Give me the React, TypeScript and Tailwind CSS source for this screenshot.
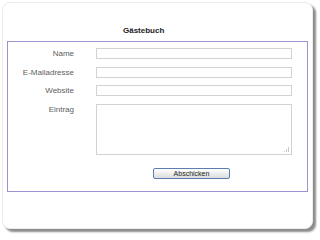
import React from "react";

export default function App() {
  const font = { fontFamily: '"Liberation Sans", Arial, sans-serif' };
  return (
    <div className="w-[320px] h-[240px] bg-white overflow-hidden" style={font}>
      <div className="ml-[2px] mt-[2px] w-[311px] h-[227px] rounded-[8px] border border-[#ececec] bg-white shadow-[3px_3px_2px_rgba(0,0,0,0.45)]">
        <div className="h-[38px] pt-[22px] pl-[120px] text-[8px] leading-[12px] font-bold text-[#222]">
          Gästebuch
        </div>
        <div className="ml-[4px] w-[301px] h-[151px] border border-[#9893d2]">
          <div className="mt-[6px] flex items-center">
            <div className="w-[66px] text-right text-[8px] leading-[11px] text-[#5e5e5e]">Name</div>
            <div className="ml-[22px] w-[196px] h-[11px] border border-[#d2d2d2] bg-white" />
          </div>
          <div className="mt-[8px] flex items-center">
            <div className="w-[66px] text-right text-[8px] leading-[11px] text-[#5e5e5e]">E-Mailadresse</div>
            <div className="ml-[22px] w-[196px] h-[11px] border border-[#d2d2d2] bg-white" />
          </div>
          <div className="mt-[7px] flex items-center">
            <div className="w-[66px] text-right text-[8px] leading-[11px] text-[#5e5e5e]">Website</div>
            <div className="ml-[22px] w-[196px] h-[11px] border border-[#d2d2d2] bg-white" />
          </div>
          <div className="mt-[8px] flex items-start">
            <div className="w-[66px] text-right text-[8px] leading-[11px] text-[#5e5e5e]">Eintrag</div>
            <div className="relative ml-[22px] w-[196px] h-[51px] border border-[#d2d2d2] bg-white">
              <svg className="absolute right-[1px] bottom-[1px]" width="6" height="6" viewBox="0 0 6 6">
                <rect x="4" y="0" width="1" height="5" fill="#c8c8c8" />
                <rect x="2" y="2" width="1" height="3" fill="#c8c8c8" />
                <rect x="0" y="4" width="1" height="1" fill="#c8c8c8" />
              </svg>
            </div>
          </div>
          <div className="mt-[13px] ml-[145px] w-[77px] h-[11px] rounded-[2px] border border-[#5c7fb0] bg-gradient-to-b from-white to-[#dcdcdc] flex items-center justify-center text-[7px] leading-[9px] text-[#222]">
            Abschicken
          </div>
        </div>
      </div>
    </div>
  );
}
